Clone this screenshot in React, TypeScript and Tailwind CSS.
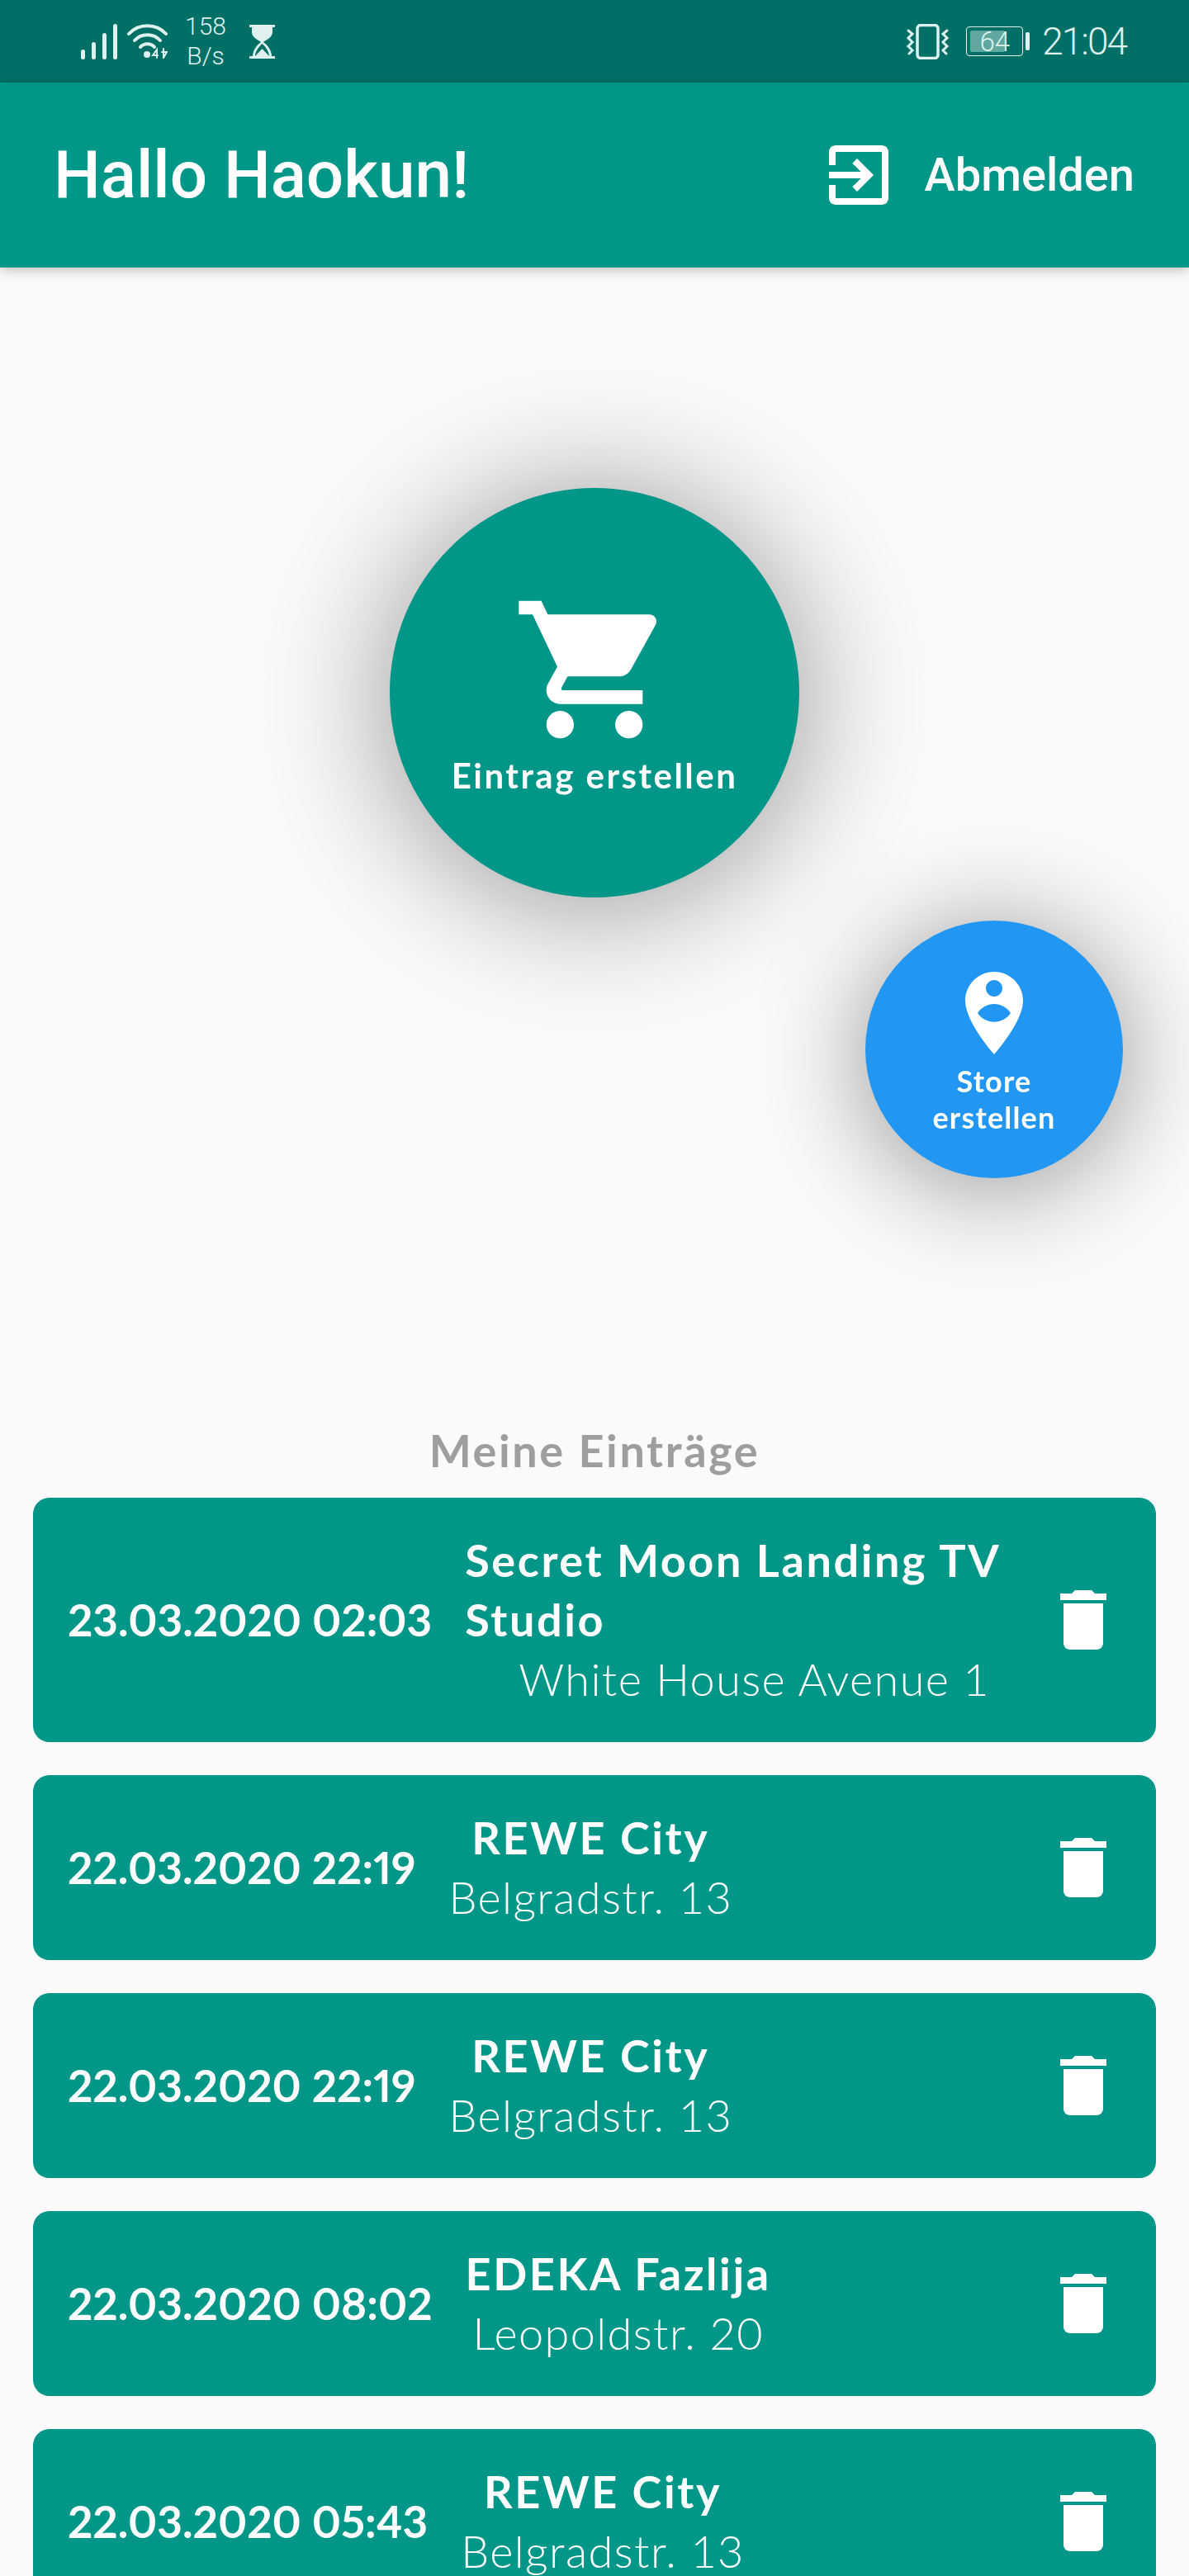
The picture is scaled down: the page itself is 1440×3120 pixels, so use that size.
import React from "react";

const QUICK = "font-['Lato','Liberation_Sans',sans-serif]";

interface Entry {
  date: string;
  title: string;
  address: string;
}

const entries: Entry[] = [
  { date: "23.03.2020 02:03", title: "Secret Moon Landing TV Studio", address: "White House Avenue 1" },
  { date: "22.03.2020 22:19", title: "REWE City", address: "Belgradstr. 13" },
  { date: "22.03.2020 22:19", title: "REWE City", address: "Belgradstr. 13" },
  { date: "22.03.2020 08:02", title: "EDEKA Fazlija", address: "Leopoldstr. 20" },
  { date: "22.03.2020 05:43", title: "REWE City", address: "Belgradstr. 13" },
];

function MdIcon({ d, className }: { d: string; className: string }) {
  return (
    <svg viewBox="0 0 24 24" className={className} fill="currentColor" fillRule="evenodd">
      <path d={d} />
    </svg>
  );
}

function StatusBar() {
  return (
    <div className="h-[100px] bg-[#006f66] text-[#dff1ee] flex items-center justify-between pl-[98px] pr-[76px] font-['Roboto',sans-serif]">
      <div className="flex items-center">
        {/* signal */}
        <svg viewBox="0 0 44 43" className="w-[44px] h-[43px]" fill="currentColor">
          <rect x="0" y="31" width="5" height="12" rx="2.5" />
          <rect x="13" y="22" width="5" height="21" rx="2.5" />
          <rect x="26" y="11" width="5" height="32" rx="2.5" />
          <rect x="39" y="0" width="5" height="43" rx="2.5" />
        </svg>
        {/* wifi */}
        <svg viewBox="0 0 49 42" className="w-[49px] h-[42px] ml-[12px]" fill="none" stroke="currentColor" strokeWidth="4" strokeLinecap="round">
          <path d="M2 12C14 -1 35 -1 47 12" />
          <path d="M9 20C17 11 32 11 40 20" />
          <path d="M16 28C20 23 29 23 33 28" />
          <circle cx="24" cy="37" r="4" fill="currentColor" stroke="none" />
          <path d="M36 41V31l-5 7h6" strokeWidth="2" />
          <path d="M44 30v11l4-7h-6" strokeWidth="2" />
        </svg>
        <div className="ml-[21px] w-[50px] text-[30px] leading-[36px] font-light text-center">
          <div>158</div>
          <div>B/s</div>
        </div>
        {/* hourglass */}
        <svg viewBox="0 0 31 41" className="w-[31px] h-[41px] ml-[28px]" fill="currentColor">
          <rect x="0" y="0" width="31" height="3" />
          <rect x="0" y="38" width="31" height="3" />
          <path d="M3 3H28V9C28 15 21 18 17 21C21 24 27 30 27 38H24C24 32 19 26 15.5 23C12 26 7 32 7 38H4C4 30 10 24 14 21C10 18 3 15 3 9Z" />
          <path d="M15.5 29L24 38H7Z" />
        </svg>
      </div>
      <div className="flex items-center">
        {/* vibrate */}
        <svg viewBox="0 0 53 43" className="w-[53px] h-[43px]" fill="none" stroke="currentColor" strokeWidth="3" strokeLinecap="round">
          <rect x="14" y="1.5" width="25" height="40" rx="4" strokeWidth="3.5" />
          <path d="M3 8l5 4-5 5 5 5-5 5 5 5-4 4" />
          <path d="M50 8l-5 4 5 5-5 5 5 5-5 5 4 4" />
        </svg>
        {/* battery */}
        <div className="relative ml-[20px] flex items-center">
          <div className="relative w-[69px] h-[36px] rounded-[4px] border border-[#dff1ee] flex items-center justify-center">
            <div className="absolute left-[4px] top-[4px] bottom-[4px] w-[42px] bg-[#5fa79f] rounded-[2px]" />
            <span className="relative text-[33px] leading-none font-light">64</span>
          </div>
          <div className="w-[5px] h-[22px] rounded-[2px] bg-[#dff1ee] ml-[3px]" />
        </div>
        <span className="ml-[15px] text-[46px] leading-none font-light tracking-[-2px]">21:04</span>
      </div>
    </div>
  );
}

function AppBar() {
  return (
    <header className="h-[224px] bg-[#009688] text-white flex items-center justify-between pl-[65px] pr-[66px] font-['Roboto',sans-serif] font-medium shadow-[0_4px_12px_rgba(0,0,0,0.22)] relative">
      <h1 className="text-[80px] leading-none">Hallo Haokun!</h1>
      <div className="flex items-center">
        <MdIcon
          className="w-[96px] h-[96px]"
          d="M10.09 15.59L11.5 17l5-5-5-5-1.41 1.41L12.67 11H3v2h9.67l-2.58 2.59zM19 3H5c-1.11 0-2 .9-2 2v4h2V5h14v14H5v-4H3v4c0 1.1.89 2 2 2h14c1.1 0 2-.9 2-2V5c0-1.1-.9-2-2-2z"
        />
        <span className="ml-[32px] text-[56px] leading-none">Abmelden</span>
      </div>
    </header>
  );
}

function EntryRow({ entry }: { entry: Entry }) {
  return (
    <div className="flex items-center bg-[#009688] text-white rounded-[20px] pl-[42px] pr-[40px] py-[40px]">
      <div className="shrink-0 text-[53px] leading-[72px] font-bold whitespace-nowrap [font-variant-numeric:proportional-nums]">
        {entry.date}
      </div>
      <div className="ml-[40px] max-w-[702px] flex flex-col items-center">
        <div className="text-[54px] leading-[72px] font-bold tracking-[2.6px]">{entry.title}</div>
        <div className="text-[54px] leading-[72px] font-light whitespace-nowrap tracking-[1.4px]">{entry.address}</div>
      </div>
      <MdIcon
        className="ml-auto shrink-0 w-[96px] h-[96px]"
        d="M6 19c0 1.1.9 2 2 2h8c1.1 0 2-.9 2-2V7H6v12zM19 4h-3.5l-1-1h-5l-1 1H5v2h14V4z"
      />
    </div>
  );
}

export default function App() {
  return (
    <div className={`w-[1440px] h-[3120px] overflow-hidden bg-[#fafafa] ${QUICK}`}>
      <StatusBar />
      <AppBar />

      {/* Action circles */}
      <div className="flex flex-col pt-[267px]">
        <button className="self-center w-[496px] h-[496px] rounded-full bg-[#009688] text-white flex flex-col items-center justify-center drop-shadow-[0_8px_80px_rgba(0,0,0,0.42)]">
          <MdIcon
            className="w-[200px] h-[200px]"
            d="M7 18c-1.1 0-1.99.9-1.99 2S5.9 22 7 22s2-.9 2-2-.9-2-2-2zM1 2v2h2l3.6 7.59-1.35 2.45c-.16.28-.25.61-.25.96 0 1.1.9 2 2 2h12v-2H7.42c-.14 0-.25-.11-.25-.25l.03-.12.9-1.63h7.45c.75 0 1.41-.41 1.75-1.03l3.58-6.49c.08-.14.12-.31.12-.48 0-.55-.45-1-1-1H5.21l-.94-2H1zm16 16c-1.1 0-1.99.9-1.99 2s.89 2 1.99 2 2-.9 2-2-.9-2-2-2z"
          />
          <span className="text-[42px] leading-[56px] font-bold tracking-[2.5px]">Eintrag erstellen</span>
        </button>
        <button className="self-end mt-[28px] mr-[80px] w-[312px] h-[312px] rounded-full bg-[#2196f3] text-white flex flex-col items-center justify-center drop-shadow-[0_10px_65px_rgba(0,0,0,0.42)]">
          <MdIcon
            className="w-[120px] h-[120px]"
            d="M12 2C8.14 2 5 5.14 5 9c0 5.25 7 13 7 13s7-7.75 7-13c0-3.86-3.14-7-7-7zm0 2c1.1 0 2 .9 2 2 0 1.11-.9 2-2 2s-2-.89-2-2c0-1.1.9-2 2-2zM8 12c.9-1.4 2.4-2.2 4-2.2s3.1.8 4 2.2c-.86 1.3-2.33 2.15-4 2.15S8.86 13.3 8 12z"
          />
          <span className="text-[36px] leading-[44px] font-bold tracking-[1.2px]">
            Store
            <br />
            erstellen
          </span>
        </button>
      </div>

      <h2 className="mt-[294px] text-center text-[54px] leading-[72px] font-bold text-[#9e9e9e] tracking-[2.6px]">
        Meine Einträge
      </h2>

      <div className="mt-[21px] px-[40px] flex flex-col gap-[40px]">
        {entries.map((entry, i) => (
          <EntryRow key={i} entry={entry} />
        ))}
      </div>
    </div>
  );
}
